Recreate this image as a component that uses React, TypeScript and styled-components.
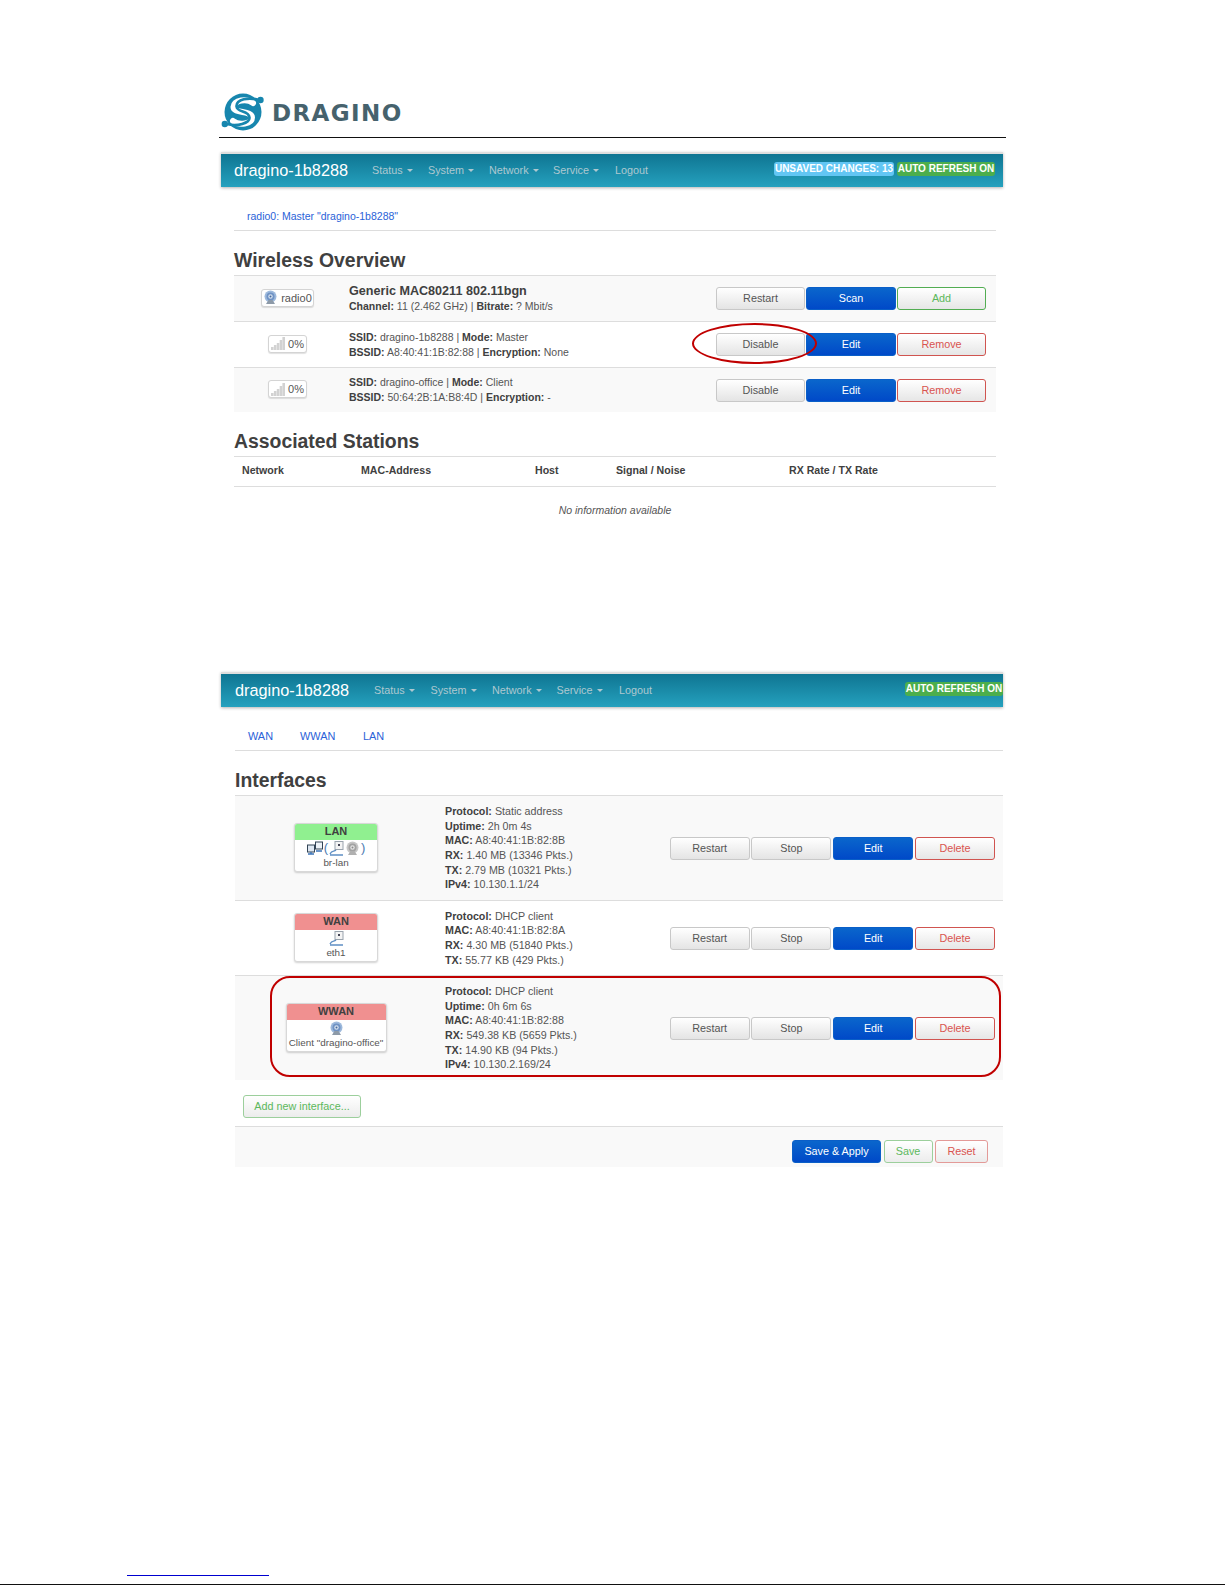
import React from "react";
import styled, { createGlobalStyle } from "styled-components";

const Global = createGlobalStyle`
  html, body { margin: 0; padding: 0; background: #fff; }
  body { font-family: "Liberation Sans", Arial, sans-serif; color: #404040; }
  * { box-sizing: border-box; }
`;

const Page = styled.div`
  position: relative;
  width: 1225px;
  height: 1585px;
  overflow: hidden;
  background: #fff;
  display: flex;
  flex-direction: column;
`;

const Masthead = styled.header`
  margin: 93px 0 0 219px;
  width: 787px;
  height: 45px;
  padding: 0 0 0 2px;
  border-bottom: 1px solid #111;
  display: flex;
  align-items: flex-start;
`;

const LogoWord = styled.span`
  margin: 8px 0 0 7px;
  font-family: "DejaVu Sans", sans-serif;
  font-weight: 700;
  font-size: 23px;
  line-height: 24px;
  letter-spacing: 1.4px;
  color: #46626d;
`;

const Shot = styled.section<{ $top: number }>`
  margin: ${(p) => p.$top}px 0 0 221px;
  width: 782px;
`;

const Navbar = styled.nav`
  height: 35px;
  padding-bottom: 2px;
  border-top: 2px solid #dedede;
  background: linear-gradient(#0f7592, #25a1be);
  box-shadow: 0 1px 3px rgba(0, 0, 0, 0.3);
  display: flex;
  align-items: center;
`;

const Brand = styled.div<{ $left: number; $w: number }>`
  width: ${(p) => p.$w}px;
  padding-left: ${(p) => p.$left}px;
  color: #fff;
  font-size: 16.3px;
  line-height: 22px;
  white-space: nowrap;
`;

const Menu = styled.div<{ $gap: number }>`
  display: flex;
  gap: ${(p) => p.$gap}px;
`;

const MenuItem = styled.a<{ $w: number; $caret?: boolean }>`
  width: ${(p) => p.$w}px;
  color: #aec8d0;
  font-size: 10.8px;
  line-height: 16px;
  white-space: nowrap;
  &::after {
    content: "";
    display: ${(p) => (p.$caret ? "inline-block" : "none")};
    margin: 0 0 2px 4px;
    border-left: 3.5px solid transparent;
    border-right: 3.5px solid transparent;
    border-top: 3.5px solid #aec8d0;
  }
`;

const Badges = styled.div<{ $right: number }>`
  margin: 0 ${(p) => p.$right}px 2px auto;
  display: flex;
  gap: 3px;
`;

const Badge = styled.span<{ $bg: string; $w: number }>`
  width: ${(p) => p.$w}px;
  height: 14px;
  border-radius: 3px;
  background: ${(p) => p.$bg};
  color: #fff;
  font-weight: 700;
  font-size: 10px;
  line-height: 13px;
  text-align: center;
  white-space: nowrap;
`;

const Content = styled.div<{ $left: number; $right: number }>`
  padding: 0 ${(p) => p.$right}px 0 ${(p) => p.$left}px;
`;

const Tabs = styled.div`
  padding: 22px 0 7px 13px;
  border-bottom: 1px solid #ddd;
  display: flex;
  height: 44px;
`;

const Tab = styled.a<{ $w?: number; $size: number }>`
  width: ${(p) => (p.$w ? `${p.$w}px` : "auto")};
  color: #2a62d8;
  font-size: ${(p) => p.$size}px;
  line-height: 14px;
  white-space: nowrap;
`;

const Heading = styled.h2`
  margin: 17px 0 3px;
  height: 24px;
  color: #404040;
  font-size: 19.4px;
  line-height: 24px;
  font-weight: 700;
`;

const Row = styled.div<{ $h: number; $shaded?: boolean; $cols: string; $pr: number }>`
  height: ${(p) => p.$h}px;
  display: grid;
  grid-template-columns: ${(p) => p.$cols};
  align-items: center;
  padding-right: ${(p) => p.$pr}px;
  border-top: 1px solid #ddd;
  background: ${(p) => (p.$shaded ? "#f9f9f9" : "#fff")};
`;

const LeadCell = styled.div`
  display: flex;
  justify-content: center;
  padding-right: 8px;
  margin-bottom: 2px;
`;

const Chip = styled.div<{ $w: number }>`
  width: ${(p) => p.$w}px;
  height: 18px;
  border: 1px solid #d4d4d4;
  border-radius: 3px;
  background: #fff;
  box-shadow: 0 1px 1px rgba(0, 0, 0, 0.12);
  display: flex;
  align-items: center;
  justify-content: center;
  gap: 3px;
  color: #555;
  font-size: 11px;
  line-height: 14px;
`;

const Info = styled.div<{ $size: number }>`
  font-size: ${(p) => p.$size}px;
  line-height: 14.6px;
  color: #555;
  white-space: nowrap;
  b { color: #404040; font-weight: 700; }
`;

const Title = styled.div`
  color: #404040;
  font-weight: 700;
  font-size: 12.6px;
  line-height: 16px;
`;

const Actions = styled.div<{ $gap: number }>`
  display: flex;
  gap: ${(p) => p.$gap}px;
  justify-content: flex-end;
`;

type Kind = "plain" | "primary" | "ok" | "bad" | "okSoft" | "badSoft";

const kinds: Record<Kind, string> = {
  plain: "color:#555;border-color:#c8c8c8;background:linear-gradient(#fff,#e4e4e4);",
  primary: "color:#fff;border-color:#0a5fc8;background:linear-gradient(#0a66cc,#0049c8);",
  ok: "color:#5cb85c;border-color:#52ad52;background:linear-gradient(#fff,#e6e6e6);",
  bad: "color:#d9534f;border-color:#d05450;background:linear-gradient(#fff,#e6e6e6);",
  okSoft: "color:#5cb85c;border-color:#9ccf9c;background:linear-gradient(#fff,#ececec);",
  badSoft: "color:#d9534f;border-color:#e39a98;background:linear-gradient(#fff,#ececec);",
};

const Button = styled.button<{ $kind: Kind; $w: number }>`
  width: ${(p) => p.$w}px;
  height: 23px;
  padding: 0 0 1px;
  border: 1px solid;
  border-radius: 3px;
  font-family: "Liberation Sans", Arial, sans-serif;
  font-size: 10.8px;
  line-height: 20px;
  white-space: nowrap;
  ${(p) => kinds[p.$kind]}
`;

const StationHead = styled.div`
  height: 31px;
  display: grid;
  grid-template-columns: 119px 174px 81px 173px 1fr;
  align-items: center;
  padding: 0 0 3px 8px;
  border-top: 1px solid #ddd;
  border-bottom: 1px solid #ddd;
  color: #404040;
  font-weight: 700;
  font-size: 10.6px;
`;

const Empty = styled.div`
  padding-top: 16px;
  text-align: center;
  color: #555;
  font-style: italic;
  font-size: 10.5px;
  line-height: 14px;
`;

const IfaceBox = styled.div<{ $w: number }>`
  width: ${(p) => p.$w}px;
  height: 49px;
  border: 1px solid #d8d8d8;
  border-radius: 3px;
  background: #fff;
  box-shadow: 0 1px 2px rgba(0, 0, 0, 0.18);
  overflow: hidden;
  text-align: center;
  color: #555;
  font-size: 9.9px;
  line-height: 12px;
  white-space: nowrap;
`;

const IfaceHead = styled.div<{ $bg: string }>`
  height: 16px;
  background: ${(p) => p.$bg};
  color: #404040;
  font-weight: 700;
  font-size: 11px;
  line-height: 15px;
`;

const IconLine = styled.div`
  height: 17px;
  display: flex;
  align-items: center;
  justify-content: center;
  gap: 1px;
  color: #4a7ab0;
  font-size: 13px;
`;

const AddRow = styled.div`
  padding: 15px 0 8px 8px;
`;

const FooterBar = styled.div`
  height: 41px;
  padding: 13px 15px 0 0;
  border-top: 1px solid #ddd;
  background: #f9f9f9;
  display: flex;
  justify-content: flex-end;
  gap: 2.5px;
`;

const PageEnd = styled.footer`
  margin-top: auto;
`;

const LinkLine = styled.div`
  width: 142px;
  height: 1px;
  margin: 0 0 8px 127px;
  background: #0000d0;
`;

const EndRule = styled.div`
  height: 1px;
  background: #111;
`;

const RedEllipse = styled.div`
  position: absolute;
  left: 692px;
  top: 323px;
  width: 125px;
  height: 41px;
  border: 2px solid #c00000;
  border-radius: 50%;
`;

const RedFrame = styled.div`
  position: absolute;
  left: 270px;
  top: 976px;
  width: 731px;
  height: 101px;
  border: 2px solid #c00000;
  border-radius: 20px;
`;

const Logo = () => (
  <svg width="44" height="38" viewBox="0 0 44 38" aria-hidden="true">
    <circle cx="22" cy="19" r="18.5" fill="#1786ae" />
    <circle cx="39.5" cy="7" r="3.2" fill="#1786ae" />
    <circle cx="3.8" cy="31" r="3.2" fill="#1786ae" />
    <path d="M32 10 C26 5 13 7 12.5 14 C12.5 21 31 17 31 24.5 C31 31 18 33 12 28" fill="none" stroke="#fff" strokeWidth="6" strokeLinecap="round" />
    <path d="M38 7 C28 4 15 6 15.5 13.5 C16 20 28 17 28.5 24.5 C29 30 16 34 6 31" fill="none" stroke="#1786ae" strokeWidth="2.6" strokeLinecap="round" />
  </svg>
);

const WifiIcon = () => (
  <svg width="15" height="15" viewBox="0 0 15 15" aria-hidden="true">
    <circle cx="7.5" cy="6.5" r="6" fill="#9db9dc" />
    <circle cx="7.5" cy="6.5" r="4" fill="#6f92c4" />
    <circle cx="7.5" cy="6.5" r="2.2" fill="#d5e1ef" />
    <circle cx="7.5" cy="6.5" r="1" fill="#47699c" />
    <path d="M5.5 10 L3 14 H12 L9.5 10" fill="#8d9aa8" />
  </svg>
);

const GreyWifiIcon = () => (
  <svg width="15" height="15" viewBox="0 0 15 15" aria-hidden="true">
    <circle cx="7.5" cy="6.5" r="6" fill="#c6c6c6" />
    <circle cx="7.5" cy="6.5" r="4" fill="#a2a2a2" />
    <circle cx="7.5" cy="6.5" r="2.2" fill="#e4e4e4" />
    <circle cx="7.5" cy="6.5" r="1" fill="#8a8a8a" />
    <path d="M5.5 10 L3 14 H12 L9.5 10" fill="#b0b0b0" />
  </svg>
);

const SignalIcon = () => (
  <svg width="14" height="13" viewBox="0 0 14 13" aria-hidden="true">
    <g fill="#d2d2d2">
      <rect x="0" y="10" width="2.6" height="3" />
      <rect x="2.9" y="8" width="2.6" height="5" />
      <rect x="5.8" y="6" width="2.6" height="7" />
      <rect x="8.7" y="3" width="2.6" height="10" />
      <rect x="11.4" y="0" width="2.6" height="13" />
    </g>
  </svg>
);

const BridgeIcon = () => (
  <svg width="16" height="14" viewBox="0 0 16 14" aria-hidden="true">
    <rect x="0.5" y="4" width="7" height="7" fill="#dfe8f2" stroke="#345" strokeWidth="1" />
    <rect x="8.5" y="1" width="7" height="7" fill="#eef3f8" stroke="#345" strokeWidth="1" />
    <path d="M1 13 H7 M4 11 V13" stroke="#3c74b8" strokeWidth="1.4" />
    <path d="M9 10 H15" stroke="#3c74b8" strokeWidth="1.4" />
  </svg>
);

const EthIcon = () => (
  <svg width="15" height="15" viewBox="0 0 15 15" aria-hidden="true">
    <rect x="6" y="0.5" width="8" height="8" fill="#f4f4f4" stroke="#9aa3ad" strokeWidth="1" />
    <rect x="9" y="3" width="2" height="2" fill="#445" />
    <path d="M1 13 C3 9 5 11 7 9 M1 14 H14" fill="none" stroke="#5f8fc4" strokeWidth="1.4" />
  </svg>
);

const Caret = ["Status", "System", "Network", "Service"];
const widths = [56, 61, 64, 62];

const TopNav = ({ left, w, gap }: { left: number; w: number; gap: number }) => (
  <>
    <Brand $left={left} $w={w}>dragino-1b8288</Brand>
    <Menu $gap={gap}>
      {Caret.map((label, i) => (
        <MenuItem key={label} $w={widths[i]} $caret>
          {label}
        </MenuItem>
      ))}
      <MenuItem $w={50}>Logout</MenuItem>
    </Menu>
  </>
);

const wlCols = "115px 1fr auto";
const ifCols = "210px 1fr auto";

export default function App() {
  return (
    <Page>
      <Global />
      <Masthead>
        <Logo />
        <LogoWord>DRAGINO</LogoWord>
      </Masthead>

      <Shot $top={14}>
        <Navbar>
          <TopNav left={13} w={151} gap={0} />
          <Badges $right={8}>
            <Badge $bg="#62c6f4" $w={120}>UNSAVED CHANGES: 13</Badge>
            <Badge $bg="#4cae4c" $w={98}>AUTO REFRESH ON</Badge>
          </Badges>
        </Navbar>
        <Content $left={13} $right={7}>
          <Tabs>
            <Tab $size={10.5}>radio0: Master "dragino-1b8288"</Tab>
          </Tabs>
          <Heading>Wireless Overview</Heading>
          <Row $h={46} $shaded $cols={wlCols} $pr={10}>
            <LeadCell>
              <Chip $w={53}>
                <WifiIcon />
                radio0
              </Chip>
            </LeadCell>
            <Info $size={10.5}>
              <Title>Generic MAC80211 802.11bgn</Title>
              <b>Channel:</b> 11 (2.462 GHz) | <b>Bitrate:</b> ? Mbit/s
            </Info>
            <Actions $gap={1}>
              <Button $kind="plain" $w={89}>Restart</Button>
              <Button $kind="primary" $w={90}>Scan</Button>
              <Button $kind="ok" $w={89}>Add</Button>
            </Actions>
          </Row>
          <Row $h={46} $cols={wlCols} $pr={10}>
            <LeadCell>
              <Chip $w={39}>
                <SignalIcon />
                0%
              </Chip>
            </LeadCell>
            <Info $size={10.5}>
              <b>SSID:</b> dragino-1b8288 | <b>Mode:</b> Master
              <br />
              <b>BSSID:</b> A8:40:41:1B:82:88 | <b>Encryption:</b> None
            </Info>
            <Actions $gap={1}>
              <Button $kind="plain" $w={89}>Disable</Button>
              <Button $kind="primary" $w={90}>Edit</Button>
              <Button $kind="bad" $w={89}>Remove</Button>
            </Actions>
          </Row>
          <Row $h={45} $shaded $cols={wlCols} $pr={10}>
            <LeadCell>
              <Chip $w={39}>
                <SignalIcon />
                0%
              </Chip>
            </LeadCell>
            <Info $size={10.5}>
              <b>SSID:</b> dragino-office | <b>Mode:</b> Client
              <br />
              <b>BSSID:</b> 50:64:2B:1A:B8:4D | <b>Encryption:</b> -
            </Info>
            <Actions $gap={1}>
              <Button $kind="plain" $w={89}>Disable</Button>
              <Button $kind="primary" $w={90}>Edit</Button>
              <Button $kind="bad" $w={89}>Remove</Button>
            </Actions>
          </Row>
          <Heading>Associated Stations</Heading>
          <StationHead>
            <span>Network</span>
            <span>MAC-Address</span>
            <span>Host</span>
            <span>Signal / Noise</span>
            <span>RX Rate / TX Rate</span>
          </StationHead>
          <Empty>No information available</Empty>
        </Content>
      </Shot>

      <Shot $top={155}>
        <Navbar>
          <TopNav left={14} w={153} gap={0.5} />
          <Badges $right={0}>
            <Badge $bg="#4cae4c" $w={98}>AUTO REFRESH ON</Badge>
          </Badges>
        </Navbar>
        <Content $left={14} $right={0}>
          <Tabs>
            <Tab $size={10.9} $w={52}>WAN</Tab>
            <Tab $size={10.9} $w={63}>WWAN</Tab>
            <Tab $size={10.9}>LAN</Tab>
          </Tabs>
          <Heading>Interfaces</Heading>
          <Row $h={105} $shaded $cols={ifCols} $pr={8}>
            <LeadCell>
              <IfaceBox $w={84}>
                <IfaceHead $bg="#90f090">LAN</IfaceHead>
                <IconLine>
                  <BridgeIcon />
                  (<EthIcon />
                  <GreyWifiIcon />)
                </IconLine>
                br-lan
              </IfaceBox>
            </LeadCell>
            <Info $size={10.7}>
              <b>Protocol:</b> Static address
              <br />
              <b>Uptime:</b> 2h 0m 4s
              <br />
              <b>MAC:</b> A8:40:41:1B:82:8B
              <br />
              <b>RX:</b> 1.40 MB (13346 Pkts.)
              <br />
              <b>TX:</b> 2.79 MB (10321 Pkts.)
              <br />
              <b>IPv4:</b> 10.130.1.1/24
            </Info>
            <Actions $gap={1.8}>
              <Button $kind="plain" $w={80}>Restart</Button>
              <Button $kind="plain" $w={80}>Stop</Button>
              <Button $kind="primary" $w={80}>Edit</Button>
              <Button $kind="bad" $w={80}>Delete</Button>
            </Actions>
          </Row>
          <Row $h={75} $cols={ifCols} $pr={8}>
            <LeadCell>
              <IfaceBox $w={84}>
                <IfaceHead $bg="#f09090">WAN</IfaceHead>
                <IconLine>
                  <EthIcon />
                </IconLine>
                eth1
              </IfaceBox>
            </LeadCell>
            <Info $size={10.7}>
              <b>Protocol:</b> DHCP client
              <br />
              <b>MAC:</b> A8:40:41:1B:82:8A
              <br />
              <b>RX:</b> 4.30 MB (51840 Pkts.)
              <br />
              <b>TX:</b> 55.77 KB (429 Pkts.)
            </Info>
            <Actions $gap={1.8}>
              <Button $kind="plain" $w={80}>Restart</Button>
              <Button $kind="plain" $w={80}>Stop</Button>
              <Button $kind="primary" $w={80}>Edit</Button>
              <Button $kind="bad" $w={80}>Delete</Button>
            </Actions>
          </Row>
          <Row $h={105} $shaded $cols={ifCols} $pr={8}>
            <LeadCell>
              <IfaceBox $w={101}>
                <IfaceHead $bg="#f09090">WWAN</IfaceHead>
                <IconLine>
                  <WifiIcon />
                </IconLine>
                Client "dragino-office"
              </IfaceBox>
            </LeadCell>
            <Info $size={10.7}>
              <b>Protocol:</b> DHCP client
              <br />
              <b>Uptime:</b> 0h 6m 6s
              <br />
              <b>MAC:</b> A8:40:41:1B:82:88
              <br />
              <b>RX:</b> 549.38 KB (5659 Pkts.)
              <br />
              <b>TX:</b> 14.90 KB (94 Pkts.)
              <br />
              <b>IPv4:</b> 10.130.2.169/24
            </Info>
            <Actions $gap={1.8}>
              <Button $kind="plain" $w={80}>Restart</Button>
              <Button $kind="plain" $w={80}>Stop</Button>
              <Button $kind="primary" $w={80}>Edit</Button>
              <Button $kind="bad" $w={80}>Delete</Button>
            </Actions>
          </Row>
          <AddRow>
            <Button $kind="okSoft" $w={118}>Add new interface...</Button>
          </AddRow>
          <FooterBar>
            <Button $kind="primary" $w={89}>Save &amp; Apply</Button>
            <Button $kind="okSoft" $w={49}>Save</Button>
            <Button $kind="badSoft" $w={53}>Reset</Button>
          </FooterBar>
        </Content>
      </Shot>

      <PageEnd>
        <LinkLine />
        <EndRule />
      </PageEnd>

      <RedEllipse />
      <RedFrame />
    </Page>
  );
}
